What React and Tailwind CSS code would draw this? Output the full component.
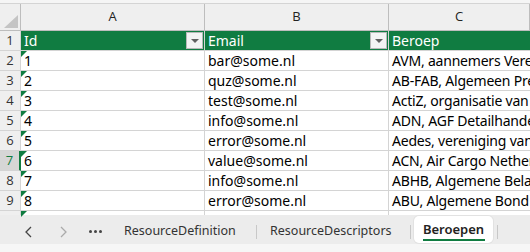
import React from 'react';

const ROWS = [
  { id: '1', email: 'bar@some.nl', job: 'AVM, aannemers Vereniging Metaal' },
  { id: '2', email: 'quz@some.nl', job: 'AB-FAB, Algemeen Prefab' },
  { id: '3', email: 'test@some.nl', job: 'ActiZ, organisatie van zorgondernemers' },
  { id: '4', email: 'info@some.nl', job: 'ADN, AGF Detailhandel Nederland' },
  { id: '5', email: 'error@some.nl', job: 'Aedes, vereniging van woningcorporaties' },
  { id: '6', email: 'value@some.nl', job: 'ACN, Air Cargo Netherlands' },
  { id: '7', email: 'info@some.nl', job: 'ABHB, Algemene Belangen' },
  { id: '8', email: 'error@some.nl', job: 'ABU, Algemene Bond Uitzendondernemingen' },
];

const cellFont = { fontFamily: '"Noto Sans", sans-serif' };
const uiFont = { fontFamily: '"Open Sans", sans-serif' };

function Corner() {
  return <span className="absolute top-0 left-0 w-0 h-0 border-t-[6px] border-r-[6px] border-t-[#107c41] border-r-transparent" />;
}

function FilterBtn() {
  return (
    <div className="w-[17px] h-[17px] bg-[#f3f3f3] border border-[#b8b8b8] flex items-center justify-center">
      <span className="w-0 h-0 border-l-[4px] border-r-[4px] border-t-[4px] border-l-transparent border-r-transparent border-t-[#606060]" />
    </div>
  );
}

export default function App() {
  return (
    <div className="w-[530px] h-[252px] overflow-hidden bg-white flex flex-col" style={cellFont}>
      <div className="h-[4px] bg-[#f5f5f5] border-b border-[#d4d4d4] shrink-0" />
      <div className="grid grid-cols-[21px_184px_184px_1fr] shrink-0">
        {/* column headers */}
        <div className="h-[27px] bg-[#efefef] border-r border-b border-[#bdbdbd] relative">
          <svg className="absolute right-[2px] bottom-[2px]" width="14" height="13"><polygon points="14,0 14,13 0,13" fill="#c4c4c4" /></svg>
        </div>
        {['A', 'B', 'C'].map((c) => (
          <div key={c} className="h-[27px] bg-[#efefef] border-r border-b border-[#bdbdbd] flex items-center justify-center text-[13px] text-[#222]" style={uiFont}>{c}</div>
        ))}
        {/* row 1: table header */}
        <div className="h-[20px] bg-[#efefef] border-r border-b border-[#d4d4d4] flex items-center justify-center text-[13px] text-[#333]" style={uiFont}>1</div>
        <div className="h-[20px] bg-[#107c41] border-r border-b border-[#d4d4d4] flex items-center justify-between pl-[3px] pr-[1px] text-white text-[14px]">
          <span>Id</span><FilterBtn />
        </div>
        <div className="h-[20px] bg-[#107c41] border-r border-b border-[#d4d4d4] flex items-center justify-between pl-[3px] pr-[1px] text-white text-[14px]">
          <span>Email</span><FilterBtn />
        </div>
        <div className="h-[20px] bg-[#107c41] border-b border-[#d4d4d4] flex items-center pl-[3px] text-white text-[14px] whitespace-nowrap overflow-hidden">
          <span>Beroep</span>
        </div>
        {ROWS.map((r, i) => {
          const n = i + 2;
          const active = n === 7;
          return (
            <React.Fragment key={n}>
              <div className={`h-[20px] border-r border-b border-[#d4d4d4] flex items-center justify-center text-[13px] ${active ? 'bg-[#d6d6d6] text-[#107c41] border-r-2 border-r-[#107c41]' : 'bg-[#efefef] text-[#333]'}`} style={uiFont}>{n}</div>
              <div className="h-[20px] border-r border-b border-[#d4d4d4] flex items-center pl-[3px] text-[14px] text-black relative">
                <Corner />{r.id}
              </div>
              <div className="h-[20px] border-r border-b border-[#d4d4d4] flex items-center pl-[3px] text-[14px] text-black">{r.email}</div>
              <div className="h-[20px] border-b border-[#d4d4d4] flex items-center pl-[3px] text-[14px] tracking-[-0.2px] text-black whitespace-nowrap overflow-hidden">{r.job}</div>
            </React.Fragment>
          );
        })}
        <div className="h-[4px] bg-[#efefef] border-r border-[#d4d4d4]" />
        <div className="h-[4px] border-r border-[#d4d4d4] relative"><Corner /></div>
        <div className="h-[4px] border-r border-[#d4d4d4]" />
        <div className="h-[4px]" />
      </div>
      {/* sheet tabs */}
      <div className="flex-1 bg-[#f6f6f6] flex flex-col">
        <div className="h-[29px] bg-[#ececec] flex items-center text-[12.5px] text-[#333] whitespace-nowrap">
          <svg className="ml-[24px] relative top-[2px]" width="10" height="12" viewBox="0 0 10 12"><path d="M7 1 L2 6 L7 11" fill="none" stroke="#444" strokeWidth="1.3" /></svg>
          <svg className="ml-[24px] relative top-[2px]" width="10" height="12" viewBox="0 0 10 12"><path d="M3 1 L8 6 L3 11" fill="none" stroke="#aaa" strokeWidth="1.3" /></svg>
          <span className="ml-[21px] flex gap-[2px] relative top-[2px]">
            <span className="w-[3px] h-[3px] rounded-full bg-[#444]" />
            <span className="w-[3px] h-[3px] rounded-full bg-[#444]" />
            <span className="w-[3px] h-[3px] rounded-full bg-[#444]" />
          </span>
          <span className="ml-[22px] w-[116px] relative top-[2px]">ResourceDefinition</span>
          <span className="ml-[16px] w-px h-[14px] bg-[#c8c8c8] relative top-[2px]" />
          <span className="ml-[13px] w-[127px] relative top-[2px]">ResourceDescriptors</span>
          <span className="ml-[13px] w-px h-[14px] bg-[#c8c8c8] relative top-[2px]" />
          <div className="ml-[3px] self-start mt-[1px] h-[27px] w-[79px] shrink-0 bg-white rounded-[5px] shadow-[0_0_0_1px_#e2e2e2] flex flex-col items-center justify-center pt-[3px] relative z-10">
            <span className="font-semibold text-[#222] text-[13px] leading-[16px]">Beroepen</span>
            <span className="w-[62px] h-[2px] bg-[#107c41] mt-[2px]" />
          </div>
          <span className="ml-[4px] w-px h-[14px] bg-[#c8c8c8] relative top-[2px]" />
        </div>
      </div>
    </div>
  );
}
